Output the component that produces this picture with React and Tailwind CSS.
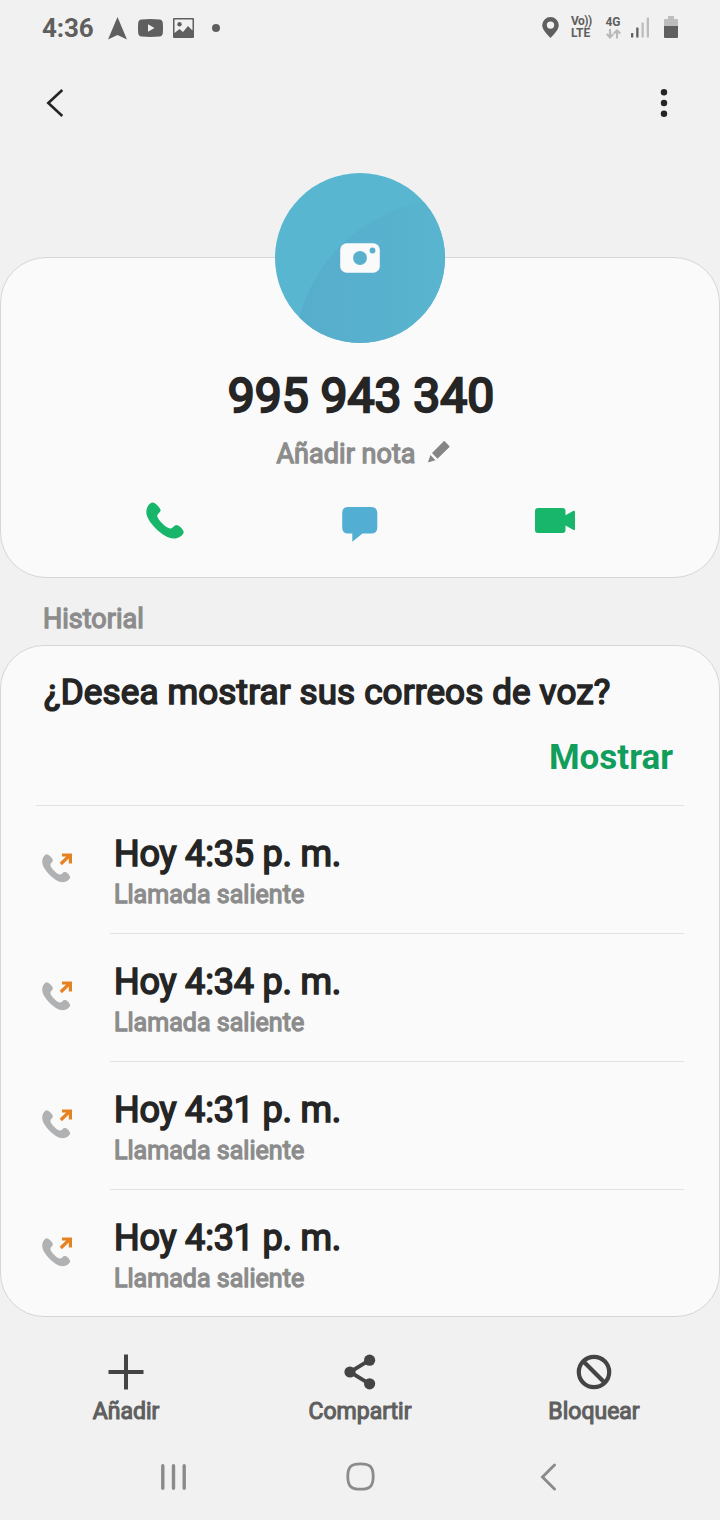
const calls = ["Hoy 4:35 p. m.", "Hoy 4:34 p. m.", "Hoy 4:31 p. m.", "Hoy 4:31 p. m."];

const HANDSET =
  "M6.500.4C9 .2 14.600 6 14.700 8.300C14.800 10.500 11.200 12 11.300 14.500C11.600 18.200 20.500 27.200 24.300 27.300C26.800 27.400 28.500 23.500 30.700 23.500C33 23.500 38.200 28.400 38 31C37.700 34 33.200 37.500 27.800 37.500C18 37.500 .5 20.500.3 10.500C.2 5.500 3.600.6 6.500.4Z";

function StatusBar() {
  return (
    <header className="flex h-14 items-center justify-between pl-[42px] pr-[42px] text-[#5f5f5f]">
      <div className="flex items-center">
        <span className="w-[66px] text-[26px] font-bold leading-8 tracking-[-0.1px]">4:36</span>
        <svg viewBox="0 0 19 23" className="h-[23px] w-[19px]" fill="currentColor">
          <path d="M9.500 0L19 22.500L9.500 18L0 22.500Z" />
        </svg>
        <svg viewBox="0 0 25 18" className="-mt-px ml-[11px] h-[18px] w-[25px]" fill="currentColor">
          <path fillRule="evenodd" d="M3.500.4Q12.500-.4 21.500.4Q24.500.6 24.800 4Q25.200 9 24.800 14Q24.500 17.300 21.500 17.600Q12.500 18.400 3.500 17.600Q.5 17.300.2 14Q-.2 9 .2 4Q.5.6 3.500.4ZM10 5.200V12.800L16.500 9Z" />
        </svg>
        <svg viewBox="0 0 21 20" className="-mt-px ml-2.5 h-5 w-[21px]" fill="currentColor">
          <path fillRule="evenodd" d="M1 0H20Q21 0 21 1V19Q21 20 20 20H1Q0 20 0 19V1Q0 0 1 0ZM1.500 1.500V15L6.500 11L10 14L15 8L19.500 12.500V1.500Z" />
          <circle cx="6.500" cy="6.300" r="2.200" />
        </svg>
        <span className="-mt-px ml-[18px] size-2 rounded-full bg-[#5f5f5f]" />
      </div>

      <div className="-mt-0.5 flex items-center">
        <svg viewBox="0 0 17 21" className="h-[21px] w-[17px]" fill="currentColor">
          <path fillRule="evenodd" d="M8.500 0A8.300 8.300 0 0 1 16.800 8.200C16.800 12.500 12 17 8.500 21C5 17 .2 12.500.2 8.200A8.300 8.300 0 0 1 8.500 0ZM8.500 4.400A3.700 3.700 0 1 0 8.500 11.800A3.700 3.700 0 1 0 8.500 4.400Z" />
        </svg>
        <div className="ml-3 flex w-[21px] flex-col text-[12px] font-bold leading-[12px]">
          <span className="whitespace-nowrap tracking-[-0.5px]">Vo))</span>
          <span className="tracking-[-0.1px]">LTE</span>
        </div>
        <div className="ml-[13px] flex w-4 flex-col items-center">
          <span className="text-[12px] font-bold leading-[13px]">4G</span>
          <svg viewBox="0 0 15 10" className="h-2.5 w-[15px]" fill="none" stroke="#b9b9b9" strokeWidth="2.100">
            <path d="M4 0V8.200M.8 5L4 8.400L7.200 5M11 9.500V1.500M7.800 4.600L11 1.400L14.200 4.600" />
          </svg>
        </div>
        <svg viewBox="0 0 18 21" className="ml-2.5 h-[21px] w-[18px]">
          <rect y="16" width="2.300" height="4.500" rx=".6" fill="#5f5f5f" />
          <rect x="5.200" y="10.500" width="2.300" height="10" rx=".6" fill="#5f5f5f" />
          <rect x="10.500" y="5.500" width="2.300" height="15" rx=".6" fill="#bdbdbd" />
          <rect x="15.700" y="0.500" width="2.300" height="20" rx=".6" fill="#bdbdbd" />
        </svg>
        <svg viewBox="0 0 14 22" className="ml-[15px] h-[22px] w-[14px]">
          <path d="M4 0H10V3H13Q14 3 14 4V10H0V4Q0 3 1 3H4Z" fill="#bdbdbd" />
          <path d="M0 10H14V21Q14 22 13 22H1Q0 22 0 21Z" fill="#5f5f5f" />
        </svg>
      </div>
    </header>
  );
}

function Toolbar() {
  return (
    <div className="flex h-[94px] items-center justify-between pl-[46px] pr-[52px] text-[#252525]">
      <svg viewBox="0 0 18 28" className="h-7 w-[18px]" fill="none" stroke="currentColor" strokeWidth="2.600">
        <path d="M16.300 1L2.300 14L16.300 27" />
      </svg>
      <svg viewBox="0 0 8 28" className="h-7 w-2" fill="currentColor">
        <circle cx="4" cy="3.300" r="3.200" />
        <circle cx="4" cy="14" r="3.200" />
        <circle cx="4" cy="24.700" r="3.200" />
      </svg>
    </div>
  );
}

function Avatar() {
  return (
    <svg viewBox="0 0 170 170" className="mx-auto -mt-[85px] size-[170px] shrink-0">
      <defs>
        <clipPath id="avatar-clip">
          <circle cx="85" cy="85" r="85" />
        </clipPath>
        <linearGradient id="avatar-shade" gradientUnits="userSpaceOnUse" x1="27" x2="160" y1="0" y2="0">
          <stop offset="0%" stopColor="#57adcc" />
          <stop offset="100%" stopColor="#58b4cf" />
        </linearGradient>
      </defs>
      <g clipPath="url(#avatar-clip)">
        <rect width="170" height="170" fill="#59b6d0" />
        <circle cx="178" cy="185" r="159" fill="url(#avatar-shade)" />
      </g>
      <rect x="65.200" y="70.300" width="39.600" height="29.400" rx="6.500" fill="#fafafa" />
      <circle cx="85" cy="85" r="6.900" fill="#58b0cd" />
      <circle cx="97.500" cy="77.500" r="2.900" fill="#58b0cd" />
    </svg>
  );
}

function ContactCard() {
  return (
    <section className="mt-[107px] flex h-[321px] flex-col rounded-[46px] border border-[#d6d6d6] bg-[#fafafa]">
      <Avatar />
      <h1 className="mt-[25px] pl-0.5 text-center text-[48px] leading-[56px] text-[#252525] [-webkit-text-stroke:2.3px_currentColor]">
        995 943 340
      </h1>
      <div className="mt-[14px] flex items-center justify-center gap-3 pl-1.5 text-[#8c8c8c]">
        <span className="text-[27px] leading-8 tracking-[0.05px] [-webkit-text-stroke:1.3px_currentColor]">Añadir nota</span>
        <svg viewBox="0 0 22 22" className="-mt-1 size-[22px]" fill="#858585">
          <path d="M15.500.4Q16.200-.2 16.900.5L21.200 5Q21.800 5.700 21.200 6.300L9.500 17.700L4 12Z" />
          <path d="M2.400 14L7.500 19.200L.8 21.200Q0 21.300.2 20.500Z" />
        </svg>
      </div>
      <div className="mt-[30px] flex h-10 items-center justify-between pl-[145px] pr-[144px]">
        <svg viewBox="0 0 38.300 38" preserveAspectRatio="none" className="h-[37px] w-[38px]" fill="#18b66a">
          <path d={HANDSET} />
        </svg>
        <svg viewBox="0 0 36 35" className="mt-2 h-[35px] w-9" fill="#53aed4">
          <path d="M6 0H29Q35.300 0 35.300 6V20.500Q35.300 26.500 29 26.500H20.500L10.300 34.700V26.500H6Q.2 26.500.2 20.500V6Q.2 0 6 0Z" />
        </svg>
        <svg viewBox="0 0 40 25" className="h-[25px] w-10" fill="#18b66a">
          <path d="M3 0H27.500Q30.500 0 30.500 3V7.300L38.500 2.800Q40 2.200 40 4V21Q40 22.600 38.500 22L30.500 17.500V22Q30.500 25 27.500 25H3Q0 25 0 22V3Q0 0 3 0Z" />
        </svg>
      </div>
    </section>
  );
}

function CallRow({ time, first }) {
  return (
    <li className="flex h-32 pl-[41px] pr-[35px]">
      <svg viewBox="0 0 31 31" className="mt-[47px] size-[31px] shrink-0">
        <g transform="translate(0 2) scale(.74 .75)">
          <path d={HANDSET} fill="#b0b1b2" />
        </g>
        <path d="M18.800 12L27.500 3.500M20 3H28.400V11.500" fill="none" stroke="#e58322" strokeWidth="3.200" />
      </svg>
      <div className={first ? "ml-[37px] flex-1 border-t border-transparent pl-1 pt-[26px]" : "ml-[37px] flex-1 border-t border-[#e2e2e2] pl-1 pt-[26px]"}>
        <p className="text-[36px] leading-[44px] tracking-[-0.2px] text-[#252525] [-webkit-text-stroke:1.6px_currentColor]">{time}</p>
        <p className="mt-1 text-[25px] leading-[30px] tracking-[0.03px] text-[#8c8c8c] [-webkit-text-stroke:1.3px_currentColor]">Llamada saliente</p>
      </div>
    </li>
  );
}

function History() {
  return (
    <>
      <h2 className="mt-[25px] h-[42px] pl-[43px] text-[27px] leading-8 text-[#8c8c8c] [-webkit-text-stroke:1.3px_currentColor]">Historial</h2>
      <section className="h-[672px] rounded-[44px] border border-[#d6d6d6] bg-[#fafafa]">
        <div className="flex h-[159px] flex-col pl-[43px] pr-[46px] pt-[25px]">
          <p className="text-[35px] leading-[44px] tracking-[0.14px] text-[#252525] [-webkit-text-stroke:1.6px_currentColor]">
            ¿Desea mostrar sus correos de voz?
          </p>
          <button className="mt-[21px] self-end text-[35px] font-bold leading-[44px] text-[#119e5d]">
            Mostrar
          </button>
        </div>
        <div className="-mb-px ml-[35px] mr-[35px] h-px bg-[#e2e2e2]" />
        <ul>
          {calls.map((time, i) => (
            <CallRow key={i} time={time} first={i === 0} />
          ))}
        </ul>
      </section>
    </>
  );
}

function Action({ label, children }) {
  return (
    <button className="flex flex-col items-center">
      <svg viewBox="0 0 36 36" className="size-9" fill="none" stroke="#444" strokeWidth="4">
        {children}
      </svg>
      <span className="mt-2 text-[23px] leading-7 text-[#5f5f5f] [-webkit-text-stroke:1.1px_currentColor]">{label}</span>
    </button>
  );
}

function BottomActions() {
  return (
    <div className="mt-[37px] grid grid-cols-3 px-[9px]">
      <Action label="Añadir">
        <path d="M18 .5V35.500M.5 18H35.500" />
      </Action>
      <Action label="Compartir">
        <path d="M27.500 6.200L8 18L27.500 29.800" strokeWidth="3.800" />
        <g fill="#444" stroke="none">
          <circle cx="27.600" cy="6.200" r="5.600" />
          <circle cx="8" cy="18" r="5.600" />
          <circle cx="27.600" cy="29.800" r="5.600" />
        </g>
      </Action>
      <Action label="Bloquear">
        <circle cx="18" cy="18" r="15.200" strokeWidth="4.200" />
        <path d="M7 7L29 29" strokeWidth="4.200" />
      </Action>
    </div>
  );
}

function NavBar() {
  return (
    <nav className="mt-[36px] grid h-7 grid-cols-3 items-center pl-[80px] pr-[78px]">
      <svg viewBox="0 0 27 28" className="h-7 w-[27px] justify-self-center" fill="none" stroke="#8b8b8b" strokeWidth="3.400" strokeLinecap="round">
        <path d="M2.800 2.800V25.200M13.500 2.800V25.200M24.200 2.800V25.200" />
      </svg>
      <svg viewBox="0 0 29 29" className="size-[29px] justify-self-center" fill="none" stroke="#8b8b8b" strokeWidth="2.800">
        <path d="M14.500 1.800C24 1.800 27.200 5 27.200 14.500C27.200 24 24 27.200 14.500 27.200C5 27.200 1.800 24 1.800 14.500C1.800 5 5 1.800 14.500 1.800Z" />
      </svg>
      <svg viewBox="0 0 17 28" className="h-7 w-[17px] justify-self-center" fill="none" stroke="#8b8b8b" strokeWidth="2.900" strokeLinecap="round">
        <path d="M14.500 2L2.500 14L14.500 26" />
      </svg>
    </nav>
  );
}

export default function App() {
  return (
    <div className="h-[1520px] w-[720px] overflow-hidden bg-[#f1f1f1] font-['Roboto',sans-serif]">
      <StatusBar />
      <Toolbar />
      <ContactCard />
      <History />
      <BottomActions />
      <NavBar />
    </div>
  );
}
